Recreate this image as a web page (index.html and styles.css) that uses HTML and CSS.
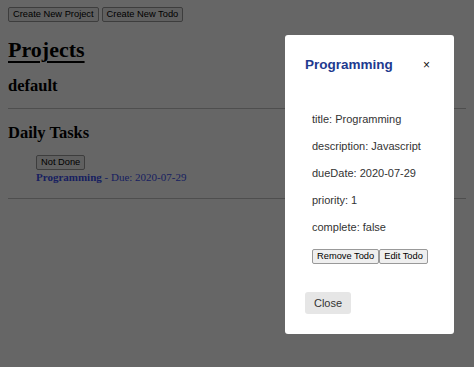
FILE: index.html
```html
<!DOCTYPE html>
<html lang="en">

<head>
    <meta charset="UTF-8">
    <meta name="viewport" content="width=device-width, initial-scale=1.0">
    <title>Todo List</title>
    <link rel="stylesheet" href="styles.css">
</head>

<body>

    <!-- Top controls -->
    <div class="controls">
        <button class="btn">Create New Project</button>
        <button class="btn">Create New Todo</button>
    </div>

    <h1 class="page-title">Projects</h1>

    <!-- Projects -->
    <div class="project">
        <h2>default</h2>
        <hr>
    </div>

    <div class="project">
        <h2>Daily Tasks</h2>
        <ul class="todos">
            <li>
                <button class="btn">Not Done</button>
                <div class="todo-line"><b>Programming</b> - Due: 2020-07-29</div>
            </li>
        </ul>
        <hr>
    </div>

    <!-- Modal -->
    <div class="overlay"></div>
    <div class="modal">
        <div class="modal-header">
            <h3>Programming</h3>
            <span class="close-x">&times;</span>
        </div>
        <div class="modal-body">
            <p>title: Programming</p>
            <p>description: Javascript</p>
            <p>dueDate: 2020-07-29</p>
            <p>priority: 1</p>
            <p>complete: false</p>
            <div class="modal-actions">
                <button class="btn">Remove Todo</button><button class="btn">Edit Todo</button>
            </div>
        </div>
        <div class="modal-footer">
            <button class="close-btn">Close</button>
        </div>
    </div>

</body>

</html>
```

FILE: styles.css
```css
/* Base */
body {
    margin: 7px 8px;
    font-family: 'Liberation Serif', 'Times New Roman', serif;
    font-size: 11px;
    color: #000;
    background: #fff;
}

.btn {
    font-family: 'Liberation Sans', Arial, sans-serif;
    font-size: 9.3px;
    height: 15px;
    padding: 0 4px;
    margin: 0;
    background: #efefef;
    color: #000;
    border: 1px solid #999;
    border-radius: 2px;
    line-height: 13px;
}

.controls {
    display: flex;
    gap: 3px;
}

/* Headings */
.page-title {
    font-size: 22px;
    line-height: 25px;
    margin: 15px 0 0;
    text-decoration: underline;
    text-decoration-thickness: 2px;
    text-underline-offset: 4px;
}

.project h2 {
    font-size: 16.5px;
    line-height: 19px;
    margin: 14px 0 0;
}

hr {
    border: none;
    border-top: 1px solid #c4c4c4;
    margin: 13px 0 0;
}

/* Todo list */
.todos {
    list-style: none;
    margin: 13px 0 0;
    padding-left: 28px;
}

.todo-line {
    color: #3c50f0;
    line-height: 14px;
}

.todos + hr {
    margin-top: 14px;
}

/* Modal */
.overlay {
    position: fixed;
    inset: 0;
    background: rgba(0, 0, 0, 0.6);
}

.modal {
    position: fixed;
    left: 285px;
    top: 35px;
    width: 169px;
    height: 299px;
    background: #fff;
    border-radius: 3px;
    font-family: 'Liberation Sans', Arial, sans-serif;
    color: #333;
    display: flex;
    flex-direction: column;
}

.modal-header {
    display: flex;
    justify-content: space-between;
    align-items: center;
    padding: 22px 24px 0 20px;
}

.modal-header h3 {
    margin: 0;
    font-size: 13.5px;
    line-height: 15px;
    color: #1e3a8f;
}

.close-x {
    font-size: 12px;
    color: #111;
}

.modal-body {
    padding: 34px 20px 0 27px;
}

.modal-body p {
    margin: 0;
    line-height: 27px;
}

.modal-actions {
    display: flex;
    margin-top: 8px;
}

.modal-footer {
    padding: 28px 20px 0;
}

.close-btn {
    font-family: 'Liberation Sans', Arial, sans-serif;
    font-size: 11px;
    color: #333;
    background: #e6e6e6;
    border: none;
    border-radius: 3px;
    width: 46px;
    height: 22px;
    padding: 0;
}
```
